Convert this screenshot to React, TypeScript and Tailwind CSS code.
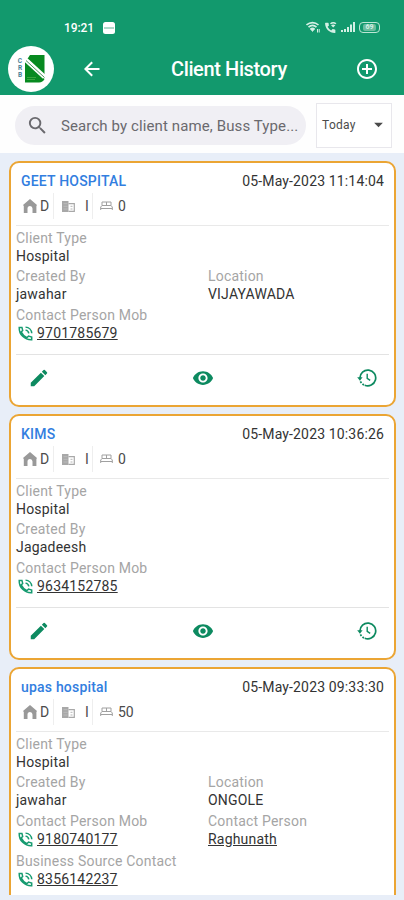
import type { ReactNode } from "react";
import {
  MdAddCircleOutline,
  MdArrowDropDown,
  MdEdit,
  MdRemoveRedEye,
  MdSearch,
} from "react-icons/md";

type Client = {
  name: string;
  date: string;
  beds: string;
  createdBy: string;
  location?: string;
  mobile: string;
  person?: string;
  sourceContact?: string;
};

const clients: Client[] = [
  {
    name: "GEET HOSPITAL",
    date: "05-May-2023 11:14:04",
    beds: "0",
    createdBy: "jawahar",
    location: "VIJAYAWADA",
    mobile: "9701785679",
  },
  {
    name: "KIMS",
    date: "05-May-2023 10:36:26",
    beds: "0",
    createdBy: "Jagadeesh",
    mobile: "9634152785",
  },
  {
    name: "upas hospital",
    date: "05-May-2023 09:33:30",
    beds: "50",
    createdBy: "jawahar",
    location: "ONGOLE",
    mobile: "9180740177",
    person: "Raghunath",
    sourceContact: "8356142237",
  },
];

function Logo() {
  return (
    <div className="relative size-[46px] rounded-full bg-white">
      <svg viewBox="0 0 46 46" className="size-[46px]">
        <path d="M22 9h14.500v20.500L19 13.500z" fill="#078a20" />
        <path d="M17 15l19.500 18c-1 2-3 3.500-5.500 3.500H17z" fill="#078a20" />
        <path d="M18 14l18.500 17" stroke="#fff" strokeWidth="4.500" />
        <path d="M18 14.500l18.500 17" stroke="#4d9a5a" strokeWidth="1" />
        <path d="M19 31.500h9M19 33.500h8" stroke="#4fb04c" strokeWidth="0.700" />
      </svg>
      <div className="absolute top-[12px] left-[9px] flex w-[6px] flex-col items-center text-[6.5px] leading-[7px] font-bold text-[#4a7f96]">
        <span>C</span>
        <span>R</span>
        <span>B</span>
      </div>
    </div>
  );
}

function StatusBar() {
  return (
    <div className="flex h-[43px] items-end pr-[24px] pb-[7px] pl-[64px] text-white">
      <span className="h-[16px] text-[12px] leading-[17px] font-medium tracking-[-0.1px]">19:21</span>
      <svg viewBox="0 0 12 12" className="mb-[2px] ml-[9px] size-[12px]">
        <rect width="12" height="12" rx="2.5" fill="#fff" />
        <path d="M1 6h10" stroke="#5fb695" strokeWidth="1" />
      </svg>
      <div className="mb-[3px] ml-auto flex h-[12px] items-center gap-[4px] text-[#d5f0e5]">
        <svg viewBox="0 0 14 12" className="h-[12px] w-[14px]" fill="none" stroke="currentColor">
          <path d="M.5 4c3.500-3.200 8.500-3.200 12 0M2.500 6.200c2.400-2.200 5.600-2.200 8 0M4.500 8.200c1.200-1 2.800-1 4 0" strokeWidth="1.600" />
          <path d="M6.500 10.500l-2-2.500h4z" fill="currentColor" strokeWidth="0.700" />
          <path d="M11.500 8v3.500M13.200 8v3.500" />
        </svg>
        <svg viewBox="0 0 24 24" className="size-[13px]" fill="currentColor">
          <path d="M20 15.500c-1.250 0-2.450-.2-3.570-.57-.35-.11-.74-.03-1.020.24l-2.200 2.200a15.100 15.100 0 0 1-6.590-6.590l2.200-2.200c.28-.28.360-.67.250-1.020A11.360 11.360 0 0 1 8.500 4c0-.55-.45-1-1-1H3c-.55 0-1 .45-1 1 0 9.940 8.060 18 18 18 .55 0 1-.45 1-1v-4.500c0-.55-.45-1-1-1z" />
          <path d="M11 4c4-3 8-3 12 0l-2 2c-3-2-5-2-8 0zM13 8c3-2 5-2 8 0l-4 4z" />
        </svg>
        <svg viewBox="0 0 14 12" className="h-[12px] w-[14px]" fill="currentColor">
          <path d="M0 9h2v2H0zM3 8h2v3H3zM6 6h2v5H6zM9 3.500h2V11H9zM12 1h2v10h-2z" />
        </svg>
        <div className="flex h-[11px] w-[21px] items-center justify-center rounded-[4px] border border-[#bce6d5]">
          <span className="rounded-[2px] bg-[#6cbc9e] px-[2px] text-[7px] leading-[7px] font-bold">69</span>
        </div>
      </div>
    </div>
  );
}

function BackArrow() {
  return (
    <svg viewBox="0 0 16 16" className="size-[16px]" fill="none" stroke="currentColor" strokeWidth="2">
      <path d="M15.500 8H2M8.200 1.200L1.400 8l6.800 6.800" />
    </svg>
  );
}

function TopBar() {
  return (
    <header className="h-[95px] bg-[#12996d]">
      <StatusBar />
      <div className="flex h-[51px] items-center pl-[8px] text-white">
        <Logo />
        <div className="ml-[30px] w-[19px]">
          <BackArrow />
        </div>
        <h1 className="ml-[68px] text-[20px] leading-[24px] font-medium tracking-[-0.38px] whitespace-nowrap">
          Client History
        </h1>
        <MdAddCircleOutline className="mr-[25px] ml-auto size-[24px]" />
      </div>
    </header>
  );
}

function SearchRow() {
  return (
    <div className="flex h-[58px] bg-[#fefefe] pl-[15px]">
      <div className="mt-[11px] flex h-[39px] w-[291px] items-center rounded-full bg-[#f0eff4] pl-[11px] text-[#6a696e]">
        <MdSearch className="size-[23px]" />
        <span className="ml-[12px] pt-px text-[15px] tracking-[0.11px] whitespace-nowrap">
          Search by client name, Buss Type...
        </span>
      </div>
      <div className="mt-[8px] ml-[10px] flex h-[45px] w-[76px] items-center border border-[#e8e7ec] bg-white pb-[2px] pl-[5px] text-[#4b4b4b]">
        <span className="text-[12px] tracking-[0.3px]">Today</span>
        <MdArrowDropDown className="mr-[2px] ml-auto size-[21px]" />
      </div>
    </div>
  );
}

function PhoneIcon() {
  return (
    <svg viewBox="0 0 16 16" className="size-[15px]" fill="none" stroke="#169b70" strokeWidth="1.600">
      <path d="M1.300 1.500h2.900l.8 3.200-1.600 1.600c1.200 2.700 3.300 4.900 6.100 6.200l1.700-1.700 3.400.9v3C7 15 1 9 1.300 1.500z" />
      <path d="M8 1.200c3.700.2 6.400 3 6.700 6.600M8 4.400c2 .2 3.200 1.400 3.500 3.400" />
    </svg>
  );
}

function HistoryIcon() {
  return (
    <svg viewBox="0 0 20 20" className="size-[20px]" fill="none" stroke="#0d8a60" strokeWidth="1.700">
      <path d="M2.900 10a7.900 7.900 0 1 1 4.800 7.200" />
      <path d="M7 17a7.900 7.900 0 0 1-3.600-3.600" strokeDasharray="1.800 1.400" />
      <path d="M.2 9.300h5.400l-2.700 3.500z" fill="#0d8a60" stroke="none" />
      <path d="M10.200 5.800v4.500l3 2" strokeWidth="1.400" />
    </svg>
  );
}

function HomeIcon() {
  return (
    <svg viewBox="0 0 14 14" className="h-[14px] w-[14px]" fill="#999">
      <path d="M7 0l7 6-.6 1V14H9.500V9.500a2.500 2.500 0 0 0-5 0V14H.8V7L0 6z" />
    </svg>
  );
}

function BuildingIcon() {
  return (
    <svg viewBox="0 0 13 11" className="h-[11px] w-[13px]">
      <path d="M0 0h6.500v11H0z" fill="#a8a8a8" />
      <path d="M6.500 2.700h5.800v7.700H6.500" fill="none" stroke="#a8a8a8" strokeWidth="1.200" />
      <path d="M1.500 2.700h4M1.500 5.300h4M1.500 8h4" stroke="#c4c4c4" strokeWidth="0.700" />
      <path d="M8.500 5.300h2M8.500 8h2" stroke="#b5b5b5" />
    </svg>
  );
}

function BedIcon() {
  return (
    <svg viewBox="0 0 13 10" className="h-[10px] w-[13px]" fill="none" stroke="#a0a0a0" strokeWidth="1">
      <path d="M2 4.500V1h9v3.500M6.500 1v3.500M.7 9V6l1.300-1.500h9L12.300 6v3M.7 7.500h11.600" />
    </svg>
  );
}

function Field({ label, children }: { label: string; children: ReactNode }) {
  return (
    <div className="h-[36px] text-[14px] leading-[18px] tracking-[0.2px] whitespace-nowrap">
      <div className="text-[#a5a5a5]">{label}</div>
      <div className="flex text-[#333]">{children}</div>
    </div>
  );
}

function Phone({ number }: { number: string }) {
  return (
    <div className="flex items-center gap-[4px] pl-[2px]">
      <PhoneIcon />
      <span className="underline">{number}</span>
    </div>
  );
}

function ClientCard({ client }: { client: Client }) {
  return (
    <article className="shrink-0 rounded-[10px] border-2 border-[#eba534] bg-white px-[5px]">
      <div className="flex h-[30px] items-center justify-between pt-[7px] pr-[5px] pl-[5px] text-[14px]">
        <h2 className="font-medium tracking-[0.2px] text-[#327ee0]">{client.name}</h2>
        <time className="tracking-[0.15px] text-[#333]">{client.date}</time>
      </div>
      <div className="flex h-[26px] items-center pl-[7px] text-[14px] text-[#4b4b4b]">
        <div className="flex h-[26px] w-[31px] items-center gap-[3px] border-r border-[#eee]">
          <HomeIcon />
          <span>D</span>
        </div>
        <div className="flex h-[26px] w-[39px] items-center border-r border-[#eee] pl-[8px]">
          <BuildingIcon />
          <span className="ml-[10px]">I</span>
        </div>
        <div className="flex items-center gap-[5px] pl-[7px]">
          <BedIcon />
          <span>{client.beds}</span>
        </div>
      </div>
      <hr className="mt-[6px] border-[#e9e9e9]" />
      <div className="mt-[3px] grid grid-cols-[192px_1fr] gap-y-[2px]">
        <div className="col-span-2">
          <Field label="Client Type">Hospital</Field>
        </div>
        <Field label="Created By">{client.createdBy}</Field>
        {client.location && <Field label="Location">{client.location}</Field>}
        <div className="col-start-1 mt-[1px]">
          <Field label="Contact Person Mob">
            <Phone number={client.mobile} />
          </Field>
        </div>
        {client.person && (
          <div className="mt-[1px]">
            <Field label="Contact Person">
              <span className="underline">{client.person}</span>
            </Field>
          </div>
        )}
        {client.sourceContact && (
          <div className="col-start-1 mt-[2px]">
            <Field label="Business Source Contact">
              <Phone number={client.sourceContact} />
            </Field>
          </div>
        )}
      </div>
      <hr className="mt-[12px] border-[#e3e3e3]" />
      <div className="flex h-[50px] items-center justify-between pr-[12px] pb-[5px] pl-[12px] text-[#0d8a60]">
        <MdEdit className="size-[22px]" />
        <MdRemoveRedEye className="mr-[2px] size-[22px]" />
        <HistoryIcon />
      </div>
    </article>
  );
}

export default function App() {
  return (
    <div className="flex h-[900px] w-[404px] flex-col overflow-hidden bg-[#e8eef8] font-['Roboto',sans-serif]">
      <TopBar />
      <SearchRow />
      <main className="mb-[5px] flex min-h-0 flex-1 flex-col gap-[7px] overflow-hidden pt-[8px] pr-[8px] pl-[9px]">
        {clients.map((client) => (
          <ClientCard key={client.name} client={client} />
        ))}
      </main>
    </div>
  );
}
